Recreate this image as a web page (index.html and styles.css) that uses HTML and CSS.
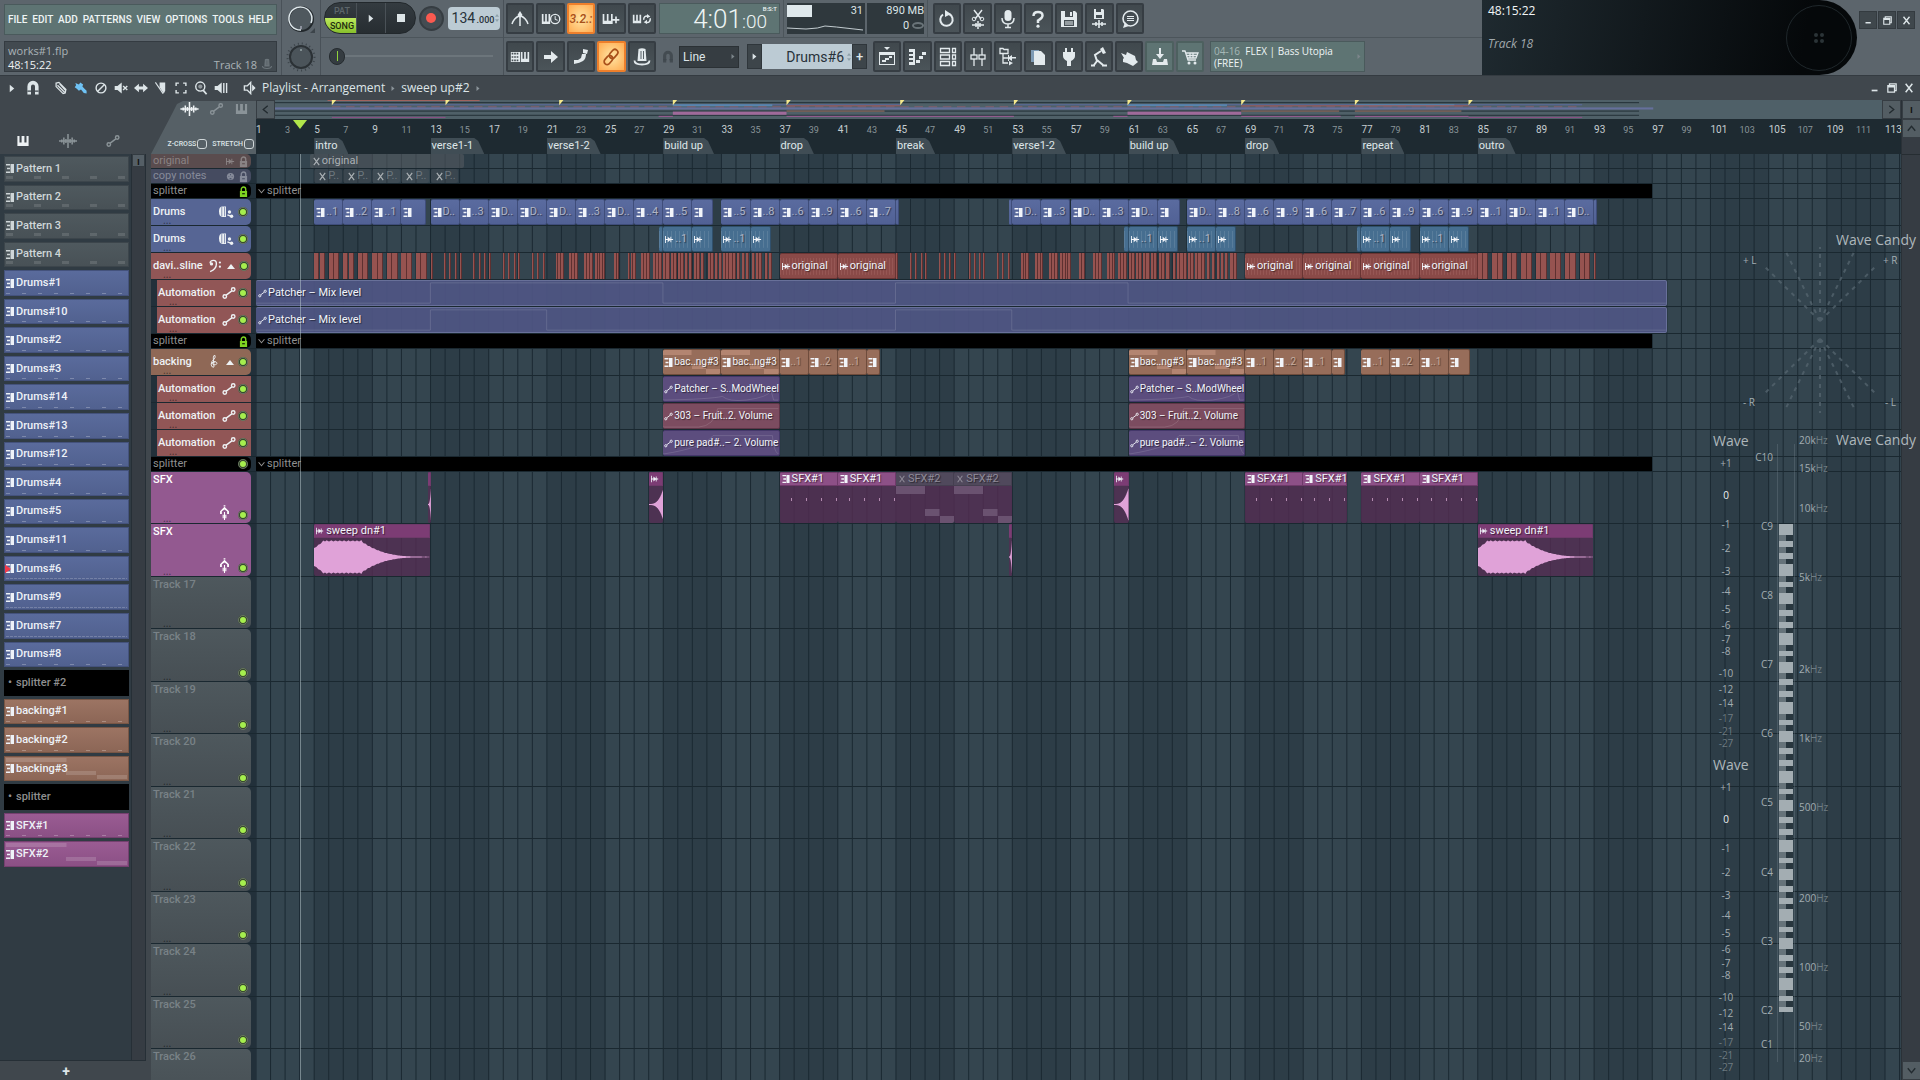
FILE: index.html
```html
<!doctype html>
<html lang="en">
<head>
<meta charset="utf-8">
<title>works#1.flp</title>
<link rel="stylesheet" href="styles.css">
<script src="playlist.js" defer></script>
</head>

<body>
<svg class="sprite" aria-hidden="true">
	<symbol id="i-metro" viewBox="0 0 20 20"><path d="M2 15Q4 9 9 7M18 15Q16 9 11 7M10 4v13" fill="none" stroke="currentColor" stroke-width="1.5"/><path d="M7.500 6L10 2l2.500 4L10 9z"/></symbol>
	<symbol id="i-wait" viewBox="0 0 24 20"><path d="M1 4h2v9h2V4h2v9h2V4h2v12H1z"/><circle cx="17" cy="10" r="5.5" fill="none" stroke="currentColor" stroke-width="1.6"/><path d="M17 6.500v4l3 1" fill="none" stroke="currentColor" stroke-width="1.2"/></symbol>
	<symbol id="i-keyplus" viewBox="0 0 24 20"><path d="M2 4h2v8h3V4h2v8h3V4h2v12H2zM17 7h2v3h3v2h-3v3h-2v-3h-3v-2h3z"/></symbol>
	<symbol id="i-keyloop" viewBox="0 0 24 20"><path d="M1 5h2v7h2V5h2v7h2V5h2v10H1z"/><path d="M14 11q0-5 5-4.500M22 9q0 6-5 5" fill="none" stroke="currentColor" stroke-width="1.800"/><path d="M18 4l4 3-4 2zM18 16l-4-2 4-3z"/></symbol>
	<symbol id="i-typekeys" viewBox="0 0 24 20"><path d="M1 4h11v12H1zm1 1v2h2V5zm3 0v2h2V5zm3 0v2h2V5zM2 9v2h2V9zm3 0v2h2V9zm3 0v2h2V9zm-6 4v2h2v-2zm3 0v2h2v-2zm3 0v2h2v-2z" fill-rule="evenodd"/><path d="M13 4h2v8h2V4h2v8h2V4h2v12H13z"/></symbol>
	<symbol id="i-arrow" viewBox="0 0 20 20"><path d="M3 8h7V4l7 6-7 6v-4H3z"/></symbol>
	<symbol id="i-slide" viewBox="0 0 20 20"><path d="M3 17v-4h4l3-2 1-4h4q0 5-3 7t-9 3z"/><path d="M12 2l5 1-1 4-4-1z"/></symbol>
	<symbol id="i-link" viewBox="0 0 20 20"><g fill="none" stroke="currentColor" stroke-width="1.700" transform="rotate(-50 10 10)"><rect x="1" y="7" width="10" height="6" rx="3"/><rect x="9" y="7" width="10" height="6" rx="3"/></g></symbol>
	<symbol id="i-hat" viewBox="0 0 20 20"><path d="M6.500 2q3.500-1.500 7 0l1 12h-9z"/><path d="M2.500 13.500q0 4 7.500 4t7.500-4" fill="none" stroke="currentColor" stroke-width="1.800"/><path d="M9 4v8M11.500 4v8" stroke="#555f65"/></symbol>
	<symbol id="i-magnet" viewBox="0 0 20 20"><path d="M3 18V8a7 7 0 0 1 14 0v10h-4.500V8a2.500 2.500 0 0 0-5 0v10z"/><path d="M3 14h5M12 14h5" stroke="#3f474d" stroke-width="1.500"/></symbol>
	<symbol id="i-undo" viewBox="0 0 20 20"><path d="M6 5.500a6.200 6.200 0 1 0 6-.5" fill="none" stroke="currentColor" stroke-width="2"/><path d="M8 1v7l6-3z"/></symbol>
	<symbol id="i-cut" viewBox="0 0 20 20"><path d="M6 1l7 9M14 1l-7 9" stroke="currentColor" stroke-width="1.500"/><circle cx="6" cy="10" r="1.800" fill="none" stroke="currentColor"/><circle cx="14" cy="10" r="1.800" fill="none" stroke="currentColor"/><path d="M4 16h12M8 14v4M10 12v8M12 14v4" stroke="currentColor" stroke-width="1.500"/></symbol>
	<symbol id="i-mic" viewBox="0 0 20 20"><rect x="6.500" y="1" width="7" height="11" rx="3.500"/><path d="M4 9q0 6 6 6t6-6M10 15v4M7 18.500h6" fill="none" stroke="currentColor" stroke-width="1.500"/></symbol>
	<symbol id="i-help" viewBox="0 0 20 20"><path d="M5.500 7Q5.500 3 10 3t4.500 3.500Q14.500 9 10 11.500V14" fill="none" stroke="currentColor" stroke-width="2.500"/><circle cx="10" cy="17.200" r="1.600"/></symbol>
	<symbol id="i-save" viewBox="0 0 20 20"><path d="M2 2h14l2 2v14H2zm4 0v6h8V2zm5 1h2v4h-2zM5 11v6h10v-6z" fill-rule="evenodd"/><path d="M6 13h8M6 15h8" stroke="currentColor"/></symbol>
	<symbol id="i-render" viewBox="0 0 20 20"><path d="M5 0h9l1 1v9H5zm2 0v3h5V0zm0 6v3h6V6z" fill-rule="evenodd"/><path d="M3 15h14M7 13v4M10 11v8M13 13v4" stroke="currentColor" stroke-width="1.600"/></symbol>
	<symbol id="i-chat" viewBox="0 0 20 20"><circle cx="10.500" cy="9.500" r="7.500" fill="none" stroke="currentColor" stroke-width="1.600"/><path d="M3 19l2-6 4 4zM7 7h7v1H7zM7 9h7v1H7zM7 11h7v1H7z"/></symbol>
	<symbol id="i-playlist" viewBox="0 0 20 20"><path d="M2 5h16v13H2zm1 3v9h14V8z" fill-rule="evenodd"/><path d="M5 14h4M8 12h4M12 10h3" stroke="currentColor" stroke-width="1.800"/><path d="M7 0h6l-3 3z"/></symbol>
	<symbol id="i-roll" viewBox="0 0 20 20"><path d="M2 2h6v16H2v-3h4v-2H2v-2h4V9H2V7h4V5H2zM9 13h4v3H9zM12 9h4v3h-4zM15 5h4v3h-4z"/></symbol>
	<symbol id="i-rack" viewBox="0 0 20 20"><g fill="none" stroke="currentColor" stroke-width="1.300"><path d="M2.500 1.500h9v4h-9zM2.500 8h9v4h-9zM2.500 14.500h9v4h-9zM14.500 1.500h3v4h-3zM14.500 8h3v4h-3zM14.500 14.500h3v4h-3z"/></g></symbol>
	<symbol id="i-mixer" viewBox="0 0 20 20"><g fill="none" stroke="currentColor" stroke-width="1.300"><path d="M6 1v7M6 12v7M14 1v7M14 12v7"/><rect x="3" y="8" width="6" height="4"/><rect x="11" y="8" width="6" height="4"/></g></symbol>
	<symbol id="i-browser" viewBox="0 0 20 20"><path d="M2 1.500h3l1 1h4v4H2zM5 7v9h5M5 11h5" fill="none" stroke="currentColor" stroke-width="1.300"/><path d="M10 8h1v2l3-2v2h4v1.500h-4V14l-3-2v2h-1zM11 14l4 2-4 2.500z"/></symbol>
	<symbol id="i-plugin" viewBox="0 0 20 20"><path d="M3 3h8v12H3z" fill="#7e9bb5"/><path d="M6 4h7l4 4v10H6z"/></symbol>
	<symbol id="i-plug" viewBox="0 0 20 20"><path d="M6 1h2v4h4V1h2v4h2v4q0 3-4 5v5H8v-5Q4 12 4 9V5h2z"/></symbol>
	<symbol id="i-tempo" viewBox="0 0 20 20"><path d="M11 2l3-2 3 6-3 1z"/><path d="M12 4L6 8l2 6-3 4M8 13l6 5M2 18.500h4M13 18.500h5" fill="none" stroke="currentColor" stroke-width="2"/></symbol>
	<symbol id="i-touch" viewBox="0 0 20 20"><path d="M2 6l5 2 1-3 4 2 4 2 1 4 2 2-5 4-6-3-4-1v-3l1-1z"/></symbol>
	<symbol id="i-down" viewBox="0 0 20 20"><path d="M9 1h2v6h3l-4 5-4-5h3zM3 12h3l1 3h6l1-3h3l1 6H2z"/></symbol>
	<symbol id="i-cart" viewBox="0 0 20 20"><path d="M2 4h3l3 9h8M6 6h12l-2 5H7M10 6v5M13 6v5M6.500 8.500h11" fill="none" stroke="currentColor" stroke-width="1.300"/><circle cx="9" cy="16" r="1.500"/><circle cx="15" cy="16" r="1.500"/></symbol>
	<symbol id="i-pencil" viewBox="0 0 20 20"><path d="M3 3l4-1 10 10-1 5-3 1L3 8zM5 6l10 10M8 4l8 9" fill="none" stroke="currentColor" stroke-width="1.800"/></symbol>
	<symbol id="i-brush" viewBox="0 0 20 20"><path d="M2 3l5 2 2-3 4 3-1 3 3 3 3 3v4l-4-1-4-5-3 2-3-3-3-2 2-3z"/></symbol>
	<symbol id="i-ban" viewBox="0 0 20 20"><path d="M15 5L5 15" stroke="currentColor" stroke-width="2"/><circle cx="10" cy="10" r="7" fill="none" stroke="currentColor" stroke-width="2"/></symbol>
	<symbol id="i-mute" viewBox="0 0 20 20"><path d="M1 7h4l6-5v16l-6-5H1z"/><path d="M13 7l6 6M19 7l-6 6" stroke="currentColor" stroke-width="2"/></symbol>
	<symbol id="i-slip" viewBox="0 0 20 20"><path d="M0 10l7-6v4h6V4l7 6-7 6v-4H7v4z"/></symbol>
	<symbol id="i-slice" viewBox="0 0 20 20"><path d="M8 2h8v12l-2 4-6-9z"/><path d="M2 2l11 16" stroke="currentColor" stroke-width="1.500"/></symbol>
	<symbol id="i-select" viewBox="0 0 20 20"><path d="M7 3H3v4M13 3h4v4M7 17H3v-4M13 17h4v-4" fill="none" stroke="currentColor" stroke-width="2"/></symbol>
	<symbol id="i-zoom" viewBox="0 0 20 20"><circle cx="9" cy="8" r="6.500" fill="none" stroke="currentColor" stroke-width="2"/><circle cx="9" cy="8" r="3" opacity=".5"/><path d="M13 13l5 6" stroke="currentColor" stroke-width="2.500"/></symbol>
	<symbol id="i-play2" viewBox="0 0 20 20"><path d="M1 7h4l6-5v16l-6-5H1zM13 3h2v14h-2zM17 3h2v14h-2z"/></symbol>
	<symbol id="i-speaker" viewBox="0 0 20 20"><path d="M2 7h4l5-5v16l-5-5H2z" fill="none" stroke="currentColor" stroke-width="2"/><path d="M13 5l5 5-5 5z"/></symbol>
	<symbol id="i-piano" viewBox="0 0 20 20"><path d="M2 3h3v9h3V3h4v9h3V3h3v14H2z"/></symbol>
	<symbol id="i-wave" viewBox="0 0 26 20"><path d="M0 10h26M4 8v4M7 5v10M10 7v6M13 0v20M16 7v6M19 5v10M22 8v4" fill="none" stroke="currentColor" stroke-width="2.200"/></symbol>
	<symbol id="i-auto" viewBox="0 0 20 20"><g fill="none" stroke="currentColor" stroke-width="2"><circle cx="4" cy="15" r="2.500"/><circle cx="16" cy="5" r="2.500"/><path d="M6 13l8-6"/></g></symbol>
	<symbol id="i-pat" viewBox="0 0 8 9"><path d="M4.500 0H8v9H4.500zM0 0h4v1.500H0zM1 3.750h3v1.500H1zM0 7.500h4V9H0z"/></symbol>
	<symbol id="i-aud" viewBox="0 0 10 10"><path d="M0 1h1v3.500h2V2l3 2.500V2h1v2.500h2v1H7V8H6V5.500L3 8V5.500H1V9H0z"/></symbol>
	<symbol id="i-mutex" viewBox="0 0 8 10"><path d="M1 1l6 8M7 1L1 9" stroke="currentColor" stroke-width="1.300"/></symbol>
	<symbol id="i-lock" viewBox="0 0 10 12"><path d="M2.500 6V3.500a2.500 2.500 0 0 1 5 0V6" fill="none" stroke="currentColor" stroke-width="1.500"/><path d="M1 5.500h8V12H1zM3.500 8v1h3V8z" fill-rule="evenodd"/></symbol>
	<symbol id="i-drum" viewBox="0 0 20 20"><path d="M0 9q0-7 5-7h5v15H5q-5 0-5-8z"/><path d="M4 3v13M8 3v13" stroke="#566594" stroke-width="1"/><path d="M12 14l5 2" stroke="currentColor" stroke-width="2"/><circle cx="15" cy="10" r="2.400"/><circle cx="18" cy="16" r="2.400"/></symbol>
	<symbol id="i-bass" viewBox="0 0 20 20"><path d="M3 18q9-4 9-11 0-5-4-5-5 0-5 4" fill="none" stroke="currentColor" stroke-width="2"/><circle cx="5" cy="7" r="2.300"/><circle cx="17" cy="5" r="1.600"/><circle cx="17" cy="11" r="1.600"/></symbol>
	<symbol id="i-treble" viewBox="0 0 14 20"><path d="M9 10q-4-1-4 2 0 2 2 2 5 0 4-3-1-2-4-1.500-4 1-4 4.500t4 3.500M7 17L6 4q0-3 2-4 2 3-1 6-4 3-4 7" fill="none" stroke="currentColor" stroke-width="1.300"/></symbol>
	<symbol id="i-fx" viewBox="0 0 12 18"><path d="M1 10V7l5-5 5 5v3H9V7L6 5 3 7v3z"/><path d="M6 8v9M4.500 11v4M7.500 11v4M5 1h2" stroke="currentColor" stroke-width="1.200"/></symbol>
	<symbol id="i-midi" viewBox="0 0 20 20"><circle cx="10" cy="10" r="8"/><path d="M6 10h1M9 6h2M13 10h1M8 15h4" stroke="#333e58" stroke-width="2"/></symbol>
	<symbol id="i-restore" viewBox="0 0 12 12"><path d="M3 3V1h8v8H9M1 3h8v8H1zM1 4.500h8" fill="none" stroke="currentColor" stroke-width="1.500"/></symbol>
	<symbol id="i-close" viewBox="0 0 12 12"><path d="M2 1l8 10M10 1L2 11" stroke="currentColor" stroke-width="1.800"/></symbol>
	<symbol id="i-min" viewBox="0 0 12 12"><path d="M2 8h7v2H2z"/></symbol>
	<symbol id="i-right" viewBox="0 0 8 12"><path d="M1 1l6 5-6 5z"/></symbol>
	<symbol id="i-spin" viewBox="0 0 6 14"><path d="M0 5l3-4 3 4zM0 9l3 4 3-4z"/></symbol>
	<symbol id="i-chev" viewBox="0 0 12 12"><path d="M1 3l5 6 5-6" fill="none" stroke="currentColor" stroke-width="1.800"/></symbol>
</svg>

<header class="toolbar">
	<div class="tb-col menu-col">
		<nav class="menu lcd">
			<a href="#">FILE</a><a href="#">EDIT</a><a href="#">ADD</a><a href="#">PATTERNS</a><a href="#">VIEW</a><a href="#">OPTIONS</a><a href="#">TOOLS</a><a href="#">HELP</a>
		</nav>
		<div class="hint">
			<span>works#1.flp</span>
			<div class="hint-row"><b>48:15:22</b><span>Track 18</span><svg class="icon"><use href="#i-hat"/></svg></div>
		</div>
	</div>
	<div class="tb-col knob-col">
		<div class="knob-cell"><svg viewBox="0 0 30 30"><circle cx="15" cy="15" r="12" fill="#4f585e" stroke="#22282c" stroke-width="2"/><path d="M15 26A11.500 11.500 0 1 1 25 19" fill="none" stroke="#dfe8ec" stroke-width="1.500"/><path d="M15 22v3" stroke="#ccd"/><path d="M29 24v5h-5z" fill="#3c444a"/></svg></div>
		<div class="knob-cell"><svg viewBox="0 0 30 30"><circle cx="15" cy="15" r="13.500" fill="none" stroke="#3c444a" stroke-width="2" stroke-dasharray="1 3"/><circle cx="15" cy="15" r="11" fill="#4b545a" stroke="#2b3135" stroke-width="2"/><path d="M15 7v2" stroke="#bcc"/></svg></div>
	</div>
	<div class="tb-col transport-col">
		<div class="tb-row transport">
			<div class="playbox">
				<div class="mode"><button>PAT</button><button class="on">SONG</button></div>
				<button aria-label="Play"><svg class="icon"><use href="#i-right"/></svg></button>
				<button aria-label="Stop"><i class="stop"></i></button>
			</div>
			<button class="rec" aria-label="Record"><i></i></button>
			<label class="tempo"><input type="text" value="134" aria-label="Tempo"><span>.000</span><svg><use href="#i-spin"/></svg></label>
		</div>
		<div class="tb-row"><input class="master" type="range" value="0" aria-label="Main pitch"></div>
	</div>
	<div class="tb-rest">
		<div class="tb-row divided">
			<div class="btns five">
				<button><svg class="icon"><use href="#i-metro"/></svg></button>
				<button><svg class="icon"><use href="#i-wait"/></svg></button>
				<button class="hot">3.2.:</button>
				<button><svg class="icon"><use href="#i-keyplus"/></svg></button>
				<button><svg class="icon"><use href="#i-keyloop"/></svg></button>
			</div>
			<div class="clock lcd"><span>4:01</span><small>:00</small><sup>B:S:T</sup></div>
			<div class="cpu">
				<div class="cpu-a"><i></i><span>31</span><svg viewBox="0 0 80 12" preserveAspectRatio="none"><path d="M0 8L20 9 32 8 40 6 52 7 80 10" fill="none" stroke="#c6d0d4"/></svg></div>
				<div class="cpu-b"><span>890 MB</span><span>0 <i></i></span></div>
			</div>
			<div class="btns seven">
				<button><svg class="icon"><use href="#i-undo"/></svg></button>
				<button><svg class="icon"><use href="#i-cut"/></svg></button>
				<button><svg class="icon"><use href="#i-mic"/></svg></button>
				<button><svg class="icon"><use href="#i-help"/></svg></button>
				<button><svg class="icon"><use href="#i-save"/></svg></button>
				<button><svg class="icon"><use href="#i-render"/></svg></button>
				<button><svg class="icon"><use href="#i-chat"/></svg></button>
			</div>
		</div>
		<div class="tb-row">
			<div class="btns five">
				<button><svg class="icon"><use href="#i-typekeys"/></svg></button>
				<button><svg class="icon"><use href="#i-arrow"/></svg></button>
				<button><svg class="icon"><use href="#i-slide"/></svg></button>
				<button class="hot"><svg class="icon"><use href="#i-link"/></svg></button>
				<button><svg class="icon"><use href="#i-hat"/></svg></button>
			</div>
			<svg class="icon snap-icon"><use href="#i-magnet"/></svg>
			<div class="snap"><select aria-label="Snap"><option>Line</option></select><svg><use href="#i-right"/></svg></div>
			<div class="pattern">
				<button aria-label="Pattern list"><svg><use href="#i-right"/></svg></button>
				<label><input type="text" value="Drums#6" aria-label="Pattern"><svg><use href="#i-spin"/></svg></label>
				<button>+</button>
			</div>
			<div class="btns eleven">
				<button><svg class="icon"><use href="#i-playlist"/></svg></button>
				<button><svg class="icon"><use href="#i-roll"/></svg></button>
				<button><svg class="icon"><use href="#i-rack"/></svg></button>
				<button><svg class="icon"><use href="#i-mixer"/></svg></button>
				<button><svg class="icon"><use href="#i-browser"/></svg></button>
				<button><svg class="icon"><use href="#i-plugin"/></svg></button>
				<button><svg class="icon"><use href="#i-plug"/></svg></button>
				<button><svg class="icon"><use href="#i-tempo"/></svg></button>
				<button><svg class="icon"><use href="#i-touch"/></svg></button>
				<button class="teal"><svg class="icon"><use href="#i-down"/></svg></button>
				<button class="teal"><svg class="icon"><use href="#i-cart"/></svg></button>
			</div>
			<a class="news lcd" href="#"><span><em>04-16</em>&nbsp; FLEX | Bass Utopia<br>(FREE)</span><svg><use href="#i-right"/></svg></a>
		</div>
	</div>
	<div class="overlay-panel">
		<div class="overlay-text"><p>48:15:22</p><p class="dim">Track 18</p></div>
		<div class="dial"><i></i><i></i><i></i><i></i></div>
	</div>
	<div class="win">
		<button aria-label="Minimize"><svg><use href="#i-min"/></svg></button>
		<button aria-label="Restore"><svg><use href="#i-restore"/></svg></button>
		<button aria-label="Close"><svg><use href="#i-close"/></svg></button>
	</div>
</header>

<div class="titlebar">
	<div class="tools">
		<svg class="tri"><use href="#i-right"/></svg>
		<svg class="mag"><use href="#i-magnet"/></svg>
		<svg><use href="#i-pencil"/></svg>
		<svg class="blue"><use href="#i-brush"/></svg>
		<svg><use href="#i-ban"/></svg>
		<svg><use href="#i-mute"/></svg>
		<svg><use href="#i-slip"/></svg>
		<svg><use href="#i-slice"/></svg>
		<svg><use href="#i-select"/></svg>
		<svg><use href="#i-zoom"/></svg>
		<svg class="last"><use href="#i-play2"/></svg>
		<svg><use href="#i-speaker"/></svg>
	</div>
	<h1>Playlist - Arrangement <svg><use href="#i-right"/></svg> sweep up#2 <svg><use href="#i-right"/></svg></h1>
	<div class="title-win"><svg><use href="#i-min"/></svg><svg><use href="#i-restore"/></svg><svg><use href="#i-close"/></svg></div>
</div>

<main class="workspace">
	<aside class="picker">
		<div class="picker-tabs"><svg class="on"><use href="#i-piano"/></svg><svg><use href="#i-wave"/></svg><svg><use href="#i-auto"/></svg></div>
		<div class="picker-body">
			<div class="patterns" id="patterns"></div>
			<div class="picker-scroll"><i>ı</i></div>
		</div>
		<button class="add">+</button>
	</aside>
	<section class="arrange">
		<div class="arrange-head">
			<div class="corner">
				<div class="corner-icons"><svg class="on"><use href="#i-wave"/></svg><svg><use href="#i-auto"/></svg><svg><use href="#i-piano"/></svg></div>
				<div class="corner-checks"><label>Z-CROSS<input type="checkbox"></label><label>STRETCH<input type="checkbox"></label></div>
			</div>
			<div class="timehead">
				<div class="mapbar">
					<button class="left" aria-label="Scroll left"><svg><use href="#i-chev"/></svg></button>
					<svg class="map" id="map" viewBox="0 0 1131 18" preserveAspectRatio="none"></svg>
					<button class="right" aria-label="Scroll right"><svg><use href="#i-chev"/></svg></button>
				</div>
				<div class="ruler" id="ruler"></div>
			</div>
		</div>
		<div class="tracks">
			<svg class="grid" id="grid" viewBox="0 0 1131 10" preserveAspectRatio="none"></svg>
			<div id="tracks"></div>
			<div class="playwrap" id="playwrap"></div>
		</div>
	</section>
	<div class="vscroll"><i class="pin">ı</i><button class="up" aria-label="Scroll up"><svg><use href="#i-chev"/></svg></button><span></span><button aria-label="Scroll down"><svg><use href="#i-chev"/></svg></button></div>
</main>

<div class="candy" id="candy">
	<svg class="scope" viewBox="0 0 120 170" id="scope"></svg>
	<div class="keys"></div>
</div>
</body>
</html>
```

FILE: styles.css
```css
*{margin:0; padding:0; box-sizing:border-box;}
html,body{height:100%;}
body{display:flex; flex-direction:column; overflow:hidden; background:#303b43; color:#dde5e8; font:500 11px/14px Roboto, "Open Sans", sans-serif;}
button,input,select{font:inherit; color:inherit; border:0; background:none;}
a{color:inherit; text-decoration:none;}
svg{fill:currentColor; display:block; flex:none;}
.sprite{position:absolute; width:0; height:0;}
i,em{font-style:normal;}

/* toolbar */
.toolbar{display:flex; height:76px; background:#5c656c; border-bottom:1px solid #343b41;}
.tb-col{display:flex; flex-direction:column; justify-content:space-between; padding:4px; border-right:1px solid #495158;}
.menu-col{width:282px; padding-bottom:3px;}
.knob-col{width:39px; padding:4px 0 3px; align-items:center;}
.knob-cell svg{width:30px; height:30px;}
.transport-col{width:183px; padding:0;}
.lcd{background:#5e7473; border:1px solid #4a5a5c; color:#eef5f5;}
.menu{display:flex; align-items:center; justify-content:space-between; height:31px; padding:0 3px; font-size:10px;}
.hint{height:31px; padding:2px 3px; background:#424a50; border:1px solid #343b41; color:#aab3b7; font:400 11px/13px "Open Sans", sans-serif;}
.hint-row{display:flex; align-items:center; gap:4px;}
.hint-row b{flex:1; font-weight:400; color:#eef2f4;}
.hint-row .icon{width:12px; height:14px; color:#6c757b;}
.tb-row{display:flex; align-items:center; height:38px;}
.tb-row.divided,.transport{border-bottom:1px solid #4c555b;}
.icon{width:20px; height:20px;}
.transport{padding:0 3px; gap:3px;}
.playbox{display:flex; width:93px; height:32px; border-radius:16px; background:linear-gradient(#343b40,#272d31); border:1px solid #22282c; overflow:hidden;}
.playbox>button{flex:1; display:flex; align-items:center; justify-content:center; border-left:1px solid #4a5157;}
.playbox>button .icon{width:6px; height:11px;}
.stop{width:8px; height:8px; background:#dde5e8;}
.mode{width:31px; display:flex; flex-direction:column; font-size:9px; line-height:14px; color:#5d666b;}
.mode button{flex:1; padding-left:3px;}
.mode .on{background:linear-gradient(#bdea5c,#88c02c); color:#1e2a10;}
.rec{width:25px; height:25px; border-radius:50%; background:#444c52; border:2px solid #363d42; display:grid; place-items:center;}
.rec i{width:10px; height:10px; border-radius:50%; background:#fb5a50;}
.tempo{display:flex; align-items:baseline; width:53px; height:23px; margin-left:1px; padding:0 1px 0 4px; border-radius:4px; background:#bccbd4; color:#28323a; line-height:23px;}
.tempo input{width:25px; font-size:14px; font-weight:400;}
.tempo span{flex:1; font-size:9px;}
.tempo svg,.pattern label svg{width:4px; height:12px; color:#8fa1ab; align-self:center;}
.master{appearance:none; width:164px; height:20px; margin-left:8px; background:linear-gradient(#6c757b,#6c757b) center/100% 2px no-repeat;}
.master::-webkit-slider-thumb{appearance:none; width:16px; height:17px; border-radius:8px; border:1px solid #252b2f; background:linear-gradient(#8fd23b,#8fd23b) center/1px 10px no-repeat,#353c41;}

.tb-rest{flex:1; display:flex; flex-direction:column;}
.btns{display:flex; gap:2px; height:31px;}
.five{width:150px; margin-left:2px;}
.seven{width:211px; margin-left:5px;}
.eleven{width:331px; margin-left:6px;}
.btns button{flex:1; display:flex; align-items:center; justify-content:center; min-width:0; background:linear-gradient(#40484d,#4b5459); border:2px solid #363d43; border-radius:2px; color:#e3eaed;}
.btns .hot{background:radial-gradient(#ffe6a6,#ffab50); border-color:#ee7f2b; color:#a9501a; font-style:italic; font-size:12px;}
.btns .teal{background:#5e7473; border-color:#4d605f;}
.clock{position:relative; display:flex; align-items:baseline; justify-content:flex-end; width:121px; height:31px; margin-left:3px; padding-right:12px; font:300 26px/30px Roboto, sans-serif;}
.clock small{font-size:19px;}
.clock sup{position:absolute; right:2px; top:2px; font:500 6px/6px Roboto, sans-serif;}
.cpu{display:flex; gap:2px; width:145px; height:37px; margin-left:3px; padding:3px 3px; border-left:1px solid #4c555b; border-right:1px solid #4c555b;}
.cpu>div{height:31px; background:#2f383d; font-weight:400; text-align:right; line-height:15px;}
.cpu-a{flex:4; display:grid; grid-template-columns:25px 1fr; padding-right:2px;}
.cpu-a i{height:12px; margin-top:2px; background:#dfe8ec;}
.cpu-a svg{grid-column:1/3; width:100%; height:12px;}
.cpu-b{flex:3; display:flex; flex-direction:column;}
.cpu-b i{display:inline-block; width:12px; height:7px; border:2px solid #6a7479; border-radius:50%;}
.snap-icon{width:14px; height:14px; margin:0 4px 0 5px; color:#434b51;}
.snap{display:flex; align-items:center; width:60px; height:22px; padding:0 3px; background:#363d42; border:1px solid #2b3135;}
.snap select{appearance:none; flex:1; font-size:12px; font-weight:400;}
.snap svg,.news svg{width:4px; height:7px; color:#7c868b;}
.pattern{display:flex; align-items:center; height:25px; margin-left:8px;}
.pattern button{width:15px; height:25px; background:#3d454a; border:1px solid #2f363b; font-size:13px; display:grid; place-items:center;}
.pattern button svg{width:5px; height:9px;}
.pattern label{display:flex; align-items:center; width:90px; padding-right:1px; background:#bccbd4;}
.pattern input{flex:1; min-width:0; height:25px; padding-right:3px; color:#28323a; font-size:14px; font-weight:400; text-align:right;}
.news{display:flex; align-items:center; justify-content:space-between; width:155px; height:31px; margin-left:6px; padding:0 3px; font:400 10px/12px "Open Sans", sans-serif;}
.news em{color:#a6b8b7;}
.overlay-panel{display:flex; justify-content:space-between; align-items:center; width:375px; padding-left:6px; border-radius:0 38px 38px 0; background:linear-gradient(100deg,#1f2a30,#05080a 85%); font:400 12px/16px "Open Sans", sans-serif;}
.overlay-text{display:flex; flex-direction:column; gap:17px; align-self:flex-start; padding-top:3px;}
.overlay-panel p{color:#f2f5f6;}
.overlay-panel .dim{font-style:italic; color:#a0a8ac;}
.dial{display:grid; grid-template-columns:4px 4px; gap:2px; place-content:center; width:66px; height:66px; margin-right:5px; border-radius:50%; border:1px solid #1f272b;}
.dial i{width:4px; height:4px; border-radius:50%; background:#2b3337;}
.win{display:flex; gap:1px; width:63px; padding:11px 0 0 2px;}
.win button{width:18px; height:18px; background:#3f474c; border:1px solid #343b40; display:grid; place-items:center;}
.win svg{width:9px; height:9px;}

/* playlist title */
.titlebar{display:flex; align-items:center; height:24px; background:#40474d;}
.tools{display:flex; align-items:center; gap:6px; padding-left:9px;}
.tools svg{width:14px; height:14px;}
.tools .tri{width:6px; height:9px; margin-right:4px;}
.tools .mag{width:16px; height:16px; margin-right:7px;}
.tools .last{margin-right:9px;}
.tools .blue{color:#6fc3f5;}
.titlebar h1{display:flex; align-items:center; gap:6px; margin-left:5px; font:400 12px/16px "Open Sans", sans-serif;}
.titlebar h1 svg{width:4px; height:7px; color:#8b949a;}
.title-win{display:flex; gap:7px; margin-left:auto; padding-right:6px;}
.title-win svg{width:10px; height:10px;}

/* picker */
.workspace{flex:1; display:flex; min-height:0; background:#40474d;}
.picker{display:flex; flex-direction:column; width:146px; margin-right:5px; background:#40474d;}
.picker-tabs{display:flex; align-items:center; gap:27px; height:54px; padding:28px 0 0 14px; color:#8b9498;}
.picker-tabs svg{width:18px; height:14px;}
.picker-tabs .on,.corner-icons .on{color:#eef2f4;}
.picker-body{flex:1; display:flex; background:#303b43;}
.patterns{flex:1; display:grid; grid-auto-rows:1fr; gap:3px; height:713px; padding:2px 2px 0 4px;}
.pat{position:relative; display:flex; align-items:center; gap:2px; padding-left:1px; color:#eef2f8; background:linear-gradient(#5a6b9c,#51618f); border:1px solid #44527c; text-align:left; overflow:hidden;}
.pat svg{width:8px; height:9px;}
.pat.grey{background:linear-gradient(#4f595e,#485156); border-color:#3c454b; color:#cfd6d8;}
.pat.black{background:#000; border-color:#000; color:#8f8f8f;}
.pat.black b{width:8px; text-align:center;}
.pat.brown{background:linear-gradient(#9c7463,#8c6656); border-color:#785645;}
.pat.pink{background:linear-gradient(#9a5c93,#8b5085); border-color:#74406f;}
.pat.current::before{content:""; position:absolute; left:-1px; top:7px; border:5px solid transparent; border-left:7px solid #f2394a; border-right:0;}
.pat::after{content:""; position:absolute; left:1px; right:1px; bottom:1px; height:1px; opacity:.25; background:repeating-linear-gradient(90deg,#fff 0 4px,transparent 4px 16px);}
.pat.grey::after{bottom:2px; opacity:.12; height:3px; background:repeating-linear-gradient(90deg,#fff 0 7px,transparent 7px 28px);}
.pat.black::after{display:none;}
.pat.full::after{opacity:.2; background:repeating-linear-gradient(90deg,#fff 0 3px,transparent 3px 4px);}
.pat.steps::after{inset:1px; height:auto; opacity:.15; background:linear-gradient(#fff,#fff) 0 0/50% 4px no-repeat,linear-gradient(#fff,#fff) 66% 75%/25% 4px no-repeat,linear-gradient(#fff,#fff) 100% 100%/25% 4px no-repeat;}
.picker-scroll{width:15px; background:#363c43; border-left:1px solid #262f36; border-right:1px solid #262f36;}
.picker-scroll i{display:grid; place-items:center; height:13px; background:#555f66; border:1px solid #333b41; color:#111;}
.add{height:20px; padding-right:14px; border-top:1px solid #262f36; font-size:14px; font-weight:700;}

/* ruler */
.arrange{position:relative; flex:1; display:flex; flex-direction:column; min-width:0;}
.arrange-head{display:flex; height:54px;}
.corner{display:flex; flex-direction:column; justify-content:space-between; width:105px; padding:2px 2px 3px 0; background:#566066; clip-path:polygon(0 100%,22px 12px,26px 4px,32px 1px,100% 1px,100% 100%);}
.corner-icons{display:flex; justify-content:flex-end; gap:10px; padding-right:5px; color:#8a9398;}
.corner-icons svg{width:15px; height:14px;}
.corner-icons .on{width:19px;}
.corner-checks{display:flex; justify-content:flex-end; gap:5px; font-size:7px; color:#dde5e8;}
.corner-checks label{display:flex; align-items:center; gap:1px;}
.corner-checks input{appearance:none; width:10px; height:10px; border:1px solid #cfd6d8; border-radius:3px;}
.timehead{flex:1; display:flex; flex-direction:column; min-width:0;}
.mapbar{display:flex; height:19px; background:#4d5b62;}
.mapbar button,.vscroll button,.pin{display:grid; place-items:center; width:19px; height:19px; background:#535d63; border:1px solid #363d43; color:#222a2f;}
.mapbar button svg,.vscroll button svg{width:9px; height:9px;}
.left svg{transform:rotate(90deg);}
.right svg{transform:rotate(-90deg);}
.up svg{transform:rotate(180deg);}
.map{flex:1; width:0; height:19px; background:#4f6068;}
.ruler{position:relative; flex:1; background:#1e2a31; overflow:hidden;}
.num{position:absolute; top:4px; color:#c5cdd0; font-size:10px; font-weight:400;}
.num.minor{color:#8a9599; font-size:9px;}
.marker{position:absolute; bottom:0; height:16px; padding:0 11px 0 1px; background:#404d55; color:#dfe6e8; font-weight:400; line-height:15px; clip-path:polygon(0 0,calc(100% - 10px) 0,calc(100% - 6px) 3px,100% 100%,0 100%);}
.playpos{position:absolute; top:1px; border:7px solid transparent; border-top:9px solid #b0e64a; border-bottom:0; transform:translateX(-50%);}

/* tracks */
.tracks{position:relative; flex:1; overflow:hidden; background:#22303a;}
.grid{position:absolute; top:0; left:105px; width:calc(100% - 105px); height:100%; shape-rendering:crispEdges;}
.grid path{stroke:#1b2932; stroke-width:1px; vector-effect:non-scaling-stroke;}
.track{position:relative; display:flex; height:27px; border-bottom:1px solid #1a2830;}
.track.small{height:15px;}
.track.tall{height:52px;}
.track.tall:nth-child(even){height:53px;}
.thead{position:relative; display:flex; align-items:center; gap:4px; width:100px; margin-right:5px; padding:0 3px 0 2px; border-radius:0 5px 5px 0; color:#eef2f4; background:#4b555a;}
.thead span{flex:1; white-space:nowrap;}
.thead svg{width:16px; height:14px;}
.thead .peak{width:8px; height:5px;}
.thead::after{content:"..."; position:absolute; left:12px; bottom:1px; line-height:6px; font-size:10px; color:rgba(0,0,0,.45);}
.small .thead::after{display:none;}
.small .thead svg{width:9px; height:11px;}
.child .thead{width:94px; margin-left:6px; border-radius:0; padding-left:1px; gap:1px;}
.blue .thead{background:#566594;}
.red .thead{background:#915656;}
.brown .thead{background:#8f6856;}
.black .thead{background:#000; color:#8f8f8f;}
.black .thead .lock{color:#7fd422;}
.offred .thead{background:#5a4c4e; color:#8a8384;}
.offblue .thead{background:#454b60; color:#858a99;}
.small .thead span{font-weight:400;}
.tall .thead{align-items:flex-start; padding-top:1px; background:linear-gradient(#4e585d,#474f54); color:#798287;}
.tall.pink .thead{background:#935990; color:#fff;}
.tall .thead svg{align-self:flex-end; width:11px; height:16px; margin-right:4px; margin-bottom:2px;}
.tall .thead .led{align-self:flex-end; margin-bottom:3px;}
.led{appearance:none; width:10px; height:10px; flex:none; border-radius:50%; border:2px solid #33422b; outline:1px solid rgba(200,220,190,.35); outline-offset:-1px; background:#a5ee4e;}
.lane{position:relative; flex:1;}
.strip{position:absolute; inset:0 auto 0 0; padding-left:11px; background:#000; color:#8f8f8f; font-weight:400;}
.strip svg{position:absolute; left:2px; top:3px; width:7px; height:8px;}
.clip{position:absolute; top:0; bottom:0; display:flex; align-items:center; gap:1px; padding-left:2px; overflow:hidden; white-space:nowrap; color:#f2f5fa; font-weight:400; border-radius:2px; border:1px solid; border-left-width:0; text-shadow:1px 1px 1px rgba(0,0,0,.5);}
.clip>svg:first-child{width:9px; height:9px;}
.clip.drum{background:linear-gradient(#5a6b9f,#516195); border-color:#3f4d7a;}
.clip.audio{background:repeating-linear-gradient(90deg,rgba(255,255,255,.1) 0 1px,transparent 1px 4px) center/100% 70% no-repeat,#466e90; border-color:#30506c;}
.clip.bass{background:repeating-linear-gradient(90deg,rgba(255,200,190,.1) 0 1px,transparent 1px 3px) center/100% 70% no-repeat,#8a4a48; border-color:#6a3433;}
.clip.slice{padding:0; border-width:0 1px 0 0; border-color:#5e3030; border-radius:0; background:#965350;}
.clip.back,.clip.purple,.clip.rose{padding-left:1px; font-size:10px;}
.clip.back{background:#976d5a; border-color:#6f4c3c;}
.clip.steps{background:linear-gradient(#b38571,#b38571) 0 0/50% 5px no-repeat,linear-gradient(#b38571,#b38571) 66% 75%/25% 5px no-repeat,linear-gradient(#b38571,#b38571) 100% 100%/25% 5px no-repeat,#976d5a;}
.clip.mix{background:rgba(79,86,132,.92); border-color:#687099;}
.clip.purple{background:#5c4d7e; border-color:#44376a;}
.clip.rose{background:#7c4c60; border-color:#5e3548;}
.clip.off{background:rgba(88,92,98,.55); border-color:transparent; color:#aab0b4; text-shadow:none;}
.clip.off.ghost{padding-left:4px; background:rgba(88,92,98,.3);}
.clip .dim{color:#b0b4c4;}
.ghost .dim{color:#6d777e;}
.back .dim{color:#c9ae9f;}
.curve{position:absolute; inset:0; width:100%; height:100%; fill:none; stroke:rgba(255,255,255,.13);}
.clip.sfx{display:block; padding:0; border:0; background:rgba(84,45,82,.8);}
.sfx .cap{display:flex; align-items:center; gap:2px; height:14px; padding-left:2px; background:#8d5087; border:1px solid #6f3a6a; border-left:0;}
.sfx.sweep .cap{background:#7c3c74;}
.sfx .cap svg{width:8px; height:8px;}
.sfx .wave{display:block; width:100%; height:calc(100% - 14px); fill:#e0a2d8;}
.sfx.mutedclip .cap{background:#50495c; border-color:#453f50; color:#8f8b98;}
.sfx .dots{height:24px; background:repeating-linear-gradient(90deg,transparent 0 11px,#b48ab0 11px 12px,transparent 12px 15px) 0 12px/100% 3px no-repeat;}
.sfx .stairs{height:calc(100% - 14px); background:linear-gradient(#6a5270,#6a5270) 0 0/50% 8px no-repeat,linear-gradient(#6a5270,#6a5270) 66% 75%/25% 7px no-repeat,linear-gradient(#6a5270,#6a5270) 100% 100%/25% 7px no-repeat;}
.playline{position:absolute; top:0; bottom:0; width:1px; background:rgba(190,205,210,.5);}
.playwrap{position:absolute; inset:0 0 0 105px; pointer-events:none;}

.vscroll{display:flex; flex-direction:column; width:19px; background:#363c43; border-left:1px solid #2a3137;}
.vscroll span{flex:1; margin-top:16px; border-top:1px solid #262d32;}
.pin{color:#111;}

/* analysers floating over the playlist */
.candy{position:absolute; right:0; top:220px; bottom:0; width:280px; color:#a3adb2; font:400 10px/14px "Open Sans", sans-serif; pointer-events:none;}
.candy b{position:absolute; font-weight:400; font-size:14px; line-height:20px; color:#aeb7bb;}
.candy span{position:absolute; white-space:nowrap; transform:translateY(-50%);}
.candy .db{left:71px; width:30px; text-align:center;}
.candy .zero{color:#eef2f4;}
.candy .low{opacity:.55;}
.candy .note{right:147px;}
.candy .hz{left:159px;}
.candy em{color:#6f7c83;}
.scope{position:absolute; left:120px; top:25px; width:120px; height:170px; fill:none; stroke:#566670; opacity:.75;}
.keys{position:absolute; left:139px; top:304px; width:14px; height:488px; background:linear-gradient(90deg,#66737a 7px,#28363e 7px);}
.keys::after{content:""; position:absolute; inset:0; background:repeating-linear-gradient(#a3adb2 0 11px,transparent 11px 17px,#a3adb2 17px 23px,transparent 23px 29px,#a3adb2 29px 35px,transparent 35px 40px,#a3adb2 40px 52px,transparent 52px 58px,#a3adb2 58px 63px,transparent 63px 69px);}
.keys::before{content:""; position:absolute; left:-2px; right:-2px; top:-80px; bottom:-50px; border:1px solid rgba(140,155,163,.25); border-width:0 1px;}
```

FILE: playlist.js
```js
var BARS = 113.1;	//bars visible in the window

function pct(n){
	return (n/BARS*100).toFixed(3)+'%';
}
function icon(id, cls){
	return '<svg'+(cls?' class="'+cls+'"':'')+'><use href="#i-'+id+'"/></svg>';
}
function clip(start, len, cls, inner){
	return '<div class="clip '+cls+'" style="left:'+pct(start-1)+';width:'+pct(len)+'">'+(inner||'')+'</div>';
}

//picker
var pats = [
	['Pattern 1','grey'],['Pattern 2','grey'],['Pattern 3','grey'],['Pattern 4','grey'],
	['Drums#1',''],['Drums#10',''],['Drums#2',''],['Drums#3',''],['Drums#14',''],['Drums#13',''],['Drums#12',''],
	['Drums#4',''],['Drums#5',''],['Drums#11',''],['Drums#6','full current'],['Drums#9','full'],['Drums#7','full'],['Drums#8',''],
	['splitter #2','black'],['backing#1','brown'],['backing#2','brown'],['backing#3','brown steps'],
	['splitter','black'],['SFX#1','pink'],['SFX#2','pink steps']
];
document.getElementById('patterns').innerHTML = pats.map(function(p){
	var mark = p[1]=='black' ? '<b>•</b>' : icon('pat');
	return '<button class="pat '+p[1]+'">'+mark+p[0]+'</button>';
}).join('');

//ruler
var markers = [[5,'intro'],[13,'verse1-1'],[21,'verse1-2'],[29,'build up'],[37,'drop'],[45,'break'],[53,'verse1-2'],[61,'build up'],[69,'drop'],[77,'repeat'],[85,'outro']];
var html = '';
for(var i=1;i<=113;i+=2){
	html += '<span class="num'+(i%4==1?'':' minor')+'" style="left:'+pct(i-1)+'">'+i+'</span>';
}
markers.forEach(function(m){
	html += '<span class="marker" style="left:'+pct(m[0]-1)+'">'+m[1]+'</span>';
});
html += '<i class="playpos" style="left:'+pct(3)+'"></i>';
document.getElementById('ruler').innerHTML = html;

//grid, ten units a bar, shade changes every four bars
var g = '';
for(i=0;i<114;i+=4){
	g += '<rect x="'+i*10+'" width="40" height="10" fill="'+(i%8?'#2d3d47':'#34454f')+'"/>';
}
for(i=0;i<114;i++){
	g += '<path d="M'+i*10+' 0v10"/>';
}
document.getElementById('grid').innerHTML = g;

//clips
function drums(){
	var d = [[5,'..1'],[7,'..2'],[9,'..1'],[11,'',1.7],[13,'D..'],[15,'..3'],[17,'D..'],[19,'D..'],[21,'D..'],[23,'..3'],[25,'D..'],[27,'..4'],[29,'..5'],[31,'',1.4],
		[33,'..5'],[35,'..8'],[37,'..6'],[39,'..9'],[41,'..6'],[43,'..7'],[45,null,.2],[52.8,null,.2],[53,'D..'],[55,'..3'],[57,'D..'],[59,'..3'],[61,'D..'],[63,'',1.5],
		[65,'D..'],[67,'..8'],[69,'..6'],[71,'..9'],[73,'..6'],[75,'..7'],[77,'..6'],[79,'..9'],[81,'..6'],[83,'..9'],[85,'..1'],[87,'D..'],[89,'..1'],[91,'D..'],[93,null,.2]];
	return d.map(function(c){
		return clip(c[0], c[2]||2, 'drum', c[1]===null?'':icon('pat')+'<span class="dim">'+c[1]+'</span>');
	}).join('');
}
function fills(){
	return [29,61,77].map(function(b){
		return clip(b-.3,.3,'audio')+[b,b+4].map(function(x){
			return clip(x,2,'audio',icon('aud')+'<span class="dim">..1</span>')+clip(x+2,1.4,'audio',icon('aud'));
		}).join('');
	}).join('');
}
function slices(base, list){
	return list.map(function(s){ return clip(base+s[0], s[1], 'bass slice'); }).join('');
}
var pairs = [], thin = [], mid = [], dense = [];
for(i=0;i<8;i++){ pairs.push([i,.36],[i+.37,.36]); }
[0,.95,1.3,1.7,2,2.95,3.3,3.65,4,5,5.35,5.73,6,6.95,7.3,7.7].forEach(function(x){ thin.push([x,.14]); });
[.6,.78,.96,1.55,1.75,1.95,2.55,2.75,2.95,3.3,3.48,3.66,3.84,4.6,4.8,5.55,5.75,5.95,6.5,6.7,6.9,7.3,7.5,7.7].forEach(function(x){ mid.push([x,.19]); });
[0,.22,.5,.72,1,1.22,1.5,1.75,2.08,2.3,2.6,3.05,3.3,3.55,3.8,4.08,4.3,4.55,4.8,5.05,5.4,5.7,6.08,6.35,6.6,7,7.25].forEach(function(x){ dense.push([x,.22]); });
function bassline(){
	var s = slices(5,pairs)+slices(13,thin)+slices(21,mid)+slices(29,dense)+slices(45,thin)+slices(53,mid)+slices(61,dense)+slices(85,pairs)+slices(93,[[0,.12]]);
	[37,41,69,73,77,81].forEach(function(b){ s += clip(b,4,'bass',icon('aud')+'original'); });
	return s;
}
function curve(d){
	return '<svg class="curve" viewBox="0 0 97 26" preserveAspectRatio="none"><path vector-effect="non-scaling-stroke" d="'+d+'"/></svg>';
}
function mix(d){
	return clip(1,97,'mix',icon('auto')+'Patcher – Mix level'+curve(d));
}
function backing(){
	var b = [[37,'..1',2],[39,'..2',2],[41,'..1',2],[43,'',.9],[69,'..1',2],[71,'..2',2],[73,'..1',2],[75,'',.9],[77,'..1',2],[79,'..2',2],[81,'..1',2],[83,'',1.5]];
	return [29,33,61,65].map(function(x){ return clip(x,4,'back steps',icon('pat')+'bac..ng#3'); }).join('')
		+ b.map(function(c){ return clip(c[0],c[2],'back',icon('pat')+'<span class="dim">'+c[1]+'</span>'); }).join('');
}
function autos(cls, name, d){
	return clip(29,8,cls,icon('auto')+name+curve(d))+clip(61,8,cls,icon('auto')+name+curve(d));
}
//envelope of an audio clip, mirrored round the middle
function wave(fn){
	var top = '', bot = '';
	for(var x=0;x<=100;x++){
		var a = fn(x/100)*(1-.08*Math.abs(Math.sin(x*2.3)));
		top += 'L'+x+' '+(50-a*48).toFixed(1);
		bot = 'L'+x+' '+(50+a*48).toFixed(1)+bot;
	}
	return '<svg class="wave" viewBox="0 0 100 100" preserveAspectRatio="none"><path d="M0 50'+top+bot+'z"/></svg>';
}
function down(t){
	if(t<.08) return .5+t*5;
	if(t<.42) return .93;
	return .02+.85*Math.pow(Math.max(0,1-(t-.42)/.58),3.2);
}
function up(t){ return .03+.95*Math.pow(t,3); }
function sfx(start, len, kind, name){
	var mark = kind=='sweep' ? 'aud' : kind=='mutedclip' ? 'mutex' : 'pat';
	var cap = '<div class="cap">'+(name===undefined?'':icon(mark)+name)+'</div>';
	var body = kind=='sweep' ? wave(len>4?down:up) : kind=='mutedclip' ? '<div class="stairs"></div>' : '<div class="dots"></div>';
	return clip(start,len,'sfx '+kind,cap+body);
}
function sfxOne(){
	return sfx(12.8,.2,'sweep')+sfx(28,1,'sweep','')+sfx(60,1,'sweep','')
		+ sfx(37,4,'pt','SFX#1')+sfx(41,4,'pt','SFX#1')+sfx(45,4,'mutedclip','SFX#2')+sfx(49,4,'mutedclip','SFX#2')
		+ sfx(69,4,'pt','SFX#1')+sfx(73,3,'pt','SFX#1')+sfx(77,4,'pt','SFX#1')+sfx(81,4,'pt','SFX#1');
}
function sfxTwo(){
	return sfx(5,7.93,'sweep','sweep dn#1')+sfx(52.8,.2,'sweep')+sfx(85,7.93,'sweep','sweep dn#1');
}
function strip(){
	return '<div class="strip" style="width:'+pct(96)+'">'+icon('chev')+'splitter</div>';
}

var lock = '<svg class="lock"><use href="#i-lock"/></svg>';
var peak = '<svg class="peak" viewBox="0 0 8 5"><path d="M0 5l4-5 4 5z"/></svg>';
var tracks = [
	['small offred','original',icon('aud')+lock, clip(4.7,10.6,'off',icon('mutex')+'original')],
	['small offblue','copy notes',icon('midi')+lock, [5,7,9,11,13].map(function(b){ return clip(b,1.9,'off ghost',icon('mutex')+'<span class="dim">P..</span>'); }).join('')],
	['small black','splitter',lock,strip()],
	['blue','Drums',icon('drum'),drums()],
	['blue','Drums',icon('drum'),fills()],
	['red','davi..sline',icon('bass')+peak,bassline()],
	['red child','Automation',icon('auto'),mix('M0 24H12V2H28V24H44V2H60V24H97')],
	['red child','Automation',icon('auto'),mix('M0 24H12V2H20V24H44V2H52V24H97')],
	['small black','splitter',lock,strip()],
	['brown','backing',icon('treble')+peak,backing()],
	['red child','Automation',icon('auto'),autos('purple','Patcher – S..ModWheel','M0 25Q40 24 50 21Q55 27 70 25Q88 22 91 15L93 25H97')],
	['red child','Automation',icon('auto'),autos('rose','303 – Fruit..2. Volume','M0 25H30Q43 24 46 5H97')],
	['red child','Automation',icon('auto'),autos('purple','pure pad#..– 2. Volume','M0 25Q35 18 42 5H92Q93 22 97 25')],
	['small black','splitter','',strip()],
	['tall pink','SFX',icon('fx'),sfxOne()],
	['tall pink','SFX',icon('fx'),sfxTwo()]
];
for(i=17;i<=26;i++){ tracks.push(['tall','Track '+i,'','']); }
document.getElementById('tracks').innerHTML = tracks.map(function(t){
	var led = t[2].indexOf('lock')<0 ? '<input class="led" type="checkbox" checked aria-label="'+t[1]+' on">' : '';
	return '<div class="track '+t[0]+'"><div class="thead"><span>'+t[1]+'</span>'+t[2]+led+'</div><div class="lane">'+t[3]+'</div></div>';
}).join('');
document.getElementById('playwrap').innerHTML = '<i class="playline" style="left:'+pct(3)+'"></i>';

//overview strip, ten units a bar
function r(a,b,y,h,c){
	return '<rect x="'+(a-1)*10+'" y="'+y+'" width="'+(b-a)*10+'" height="'+h+'" fill="'+c+'"/>';
}
var m = r(4.7,15.4,0,1,'#a0635f')+r(1,97,2,1,'#26333a');
[[5,45],[53,93]].forEach(function(p){ m += r(p[0],p[1],4,1,'#5a699a'); });
[[29,36],[61,68],[77,84]].forEach(function(p){ m += r(p[0],p[1],4,2,'#5885ad'); });
[[37,45],[69,85]].forEach(function(p){ m += r(p[0],p[1],5,1,'#9a5a5c'); });
for(i=5;i<93;i++){ m += r(i,i+.6,6,1,'#8a5e6c'); }
m += r(1,98,7,2,'#66709c')+r(1,97,10,1,'#26333a')+r(1,97,14,1,'#26333a');
[[29,37],[61,69]].forEach(function(p){ m += r(p[0],p[1],11,3,'#a06a9a'); });
[[37,43.9],[69,75.9],[77,84.5]].forEach(function(p){ m += r(p[0],p[1],10,1,'#9a7060'); });
[[28,29],[37,53],[60,61],[69,76],[77,85]].forEach(function(p){ m += r(p[0],p[1],15,1,'#9a5c93'); });
m += r(5,13,16,1,'#8b5085')+r(85,93,16,1,'#8b5085');
markers.forEach(function(k){ m += '<path d="M'+(k[0]-1)*10+' 0h3l-3 5z" fill="#f5e98c"/>'; });
document.getElementById('map').innerHTML = m;

//analysers
var db = [['+1',243],['0',275],['-1',304],['-2',328],['-3',351],['-4',371],['-5',389],['-6',405],['-7',419],['-8',431],['-10',453],['-12',469],['-14',483],['-17',498],['-21',511],['-27',523]];
var notes = [['C10',237],['C9',306],['C8',375],['C7',444],['C6',513],['C5',582],['C4',652],['C3',721],['C2',790],['C1',824]];
var hz = [['20k',220],['15k',248],['10k',288],['5k',357],['2k',449],['1k',518],['500',587],['200',678],['100',747],['50',806],['20',838]];
var c = '';
[0,324].forEach(function(off){
	c += '<b style="left:73px;top:'+(211+off)+'px">Wave</b>';
	db.forEach(function(d, n){
		c += '<span class="db'+(n==1?' zero':n>12?' low':'')+'" style="top:'+(d[1]+off)+'px">'+d[0]+'</span>';
	});
});
notes.forEach(function(n){ c += '<span class="note" style="top:'+n[1]+'px">'+n[0]+'</span>'; });
hz.forEach(function(h){ c += '<span class="hz" style="top:'+h[1]+'px">'+h[0]+'<em>Hz</em></span>'; });
c += '<b style="right:4px;top:10px">Wave Candy</b><b style="right:4px;top:210px">Wave Candy</b>';
[['+ L',103,40],['+ R',243,40],['- R',103,182],['- L',245,182]].forEach(function(l){
	c += '<span style="left:'+l[1]+'px;top:'+l[2]+'px">'+l[0]+'</span>';
});
document.getElementById('candy').insertAdjacentHTML('beforeend', c);

var s = '';
[[60,2],[25,5],[95,5],[5,22],[115,22]].forEach(function(p){
	s += '<path stroke-dasharray="4 5" stroke-width="2" d="M60 76L'+p[0]+' '+p[1]+'M60 94L'+p[0]+' '+(170-p[1])+'"/>';
});
document.getElementById('scope').innerHTML = s;
```
